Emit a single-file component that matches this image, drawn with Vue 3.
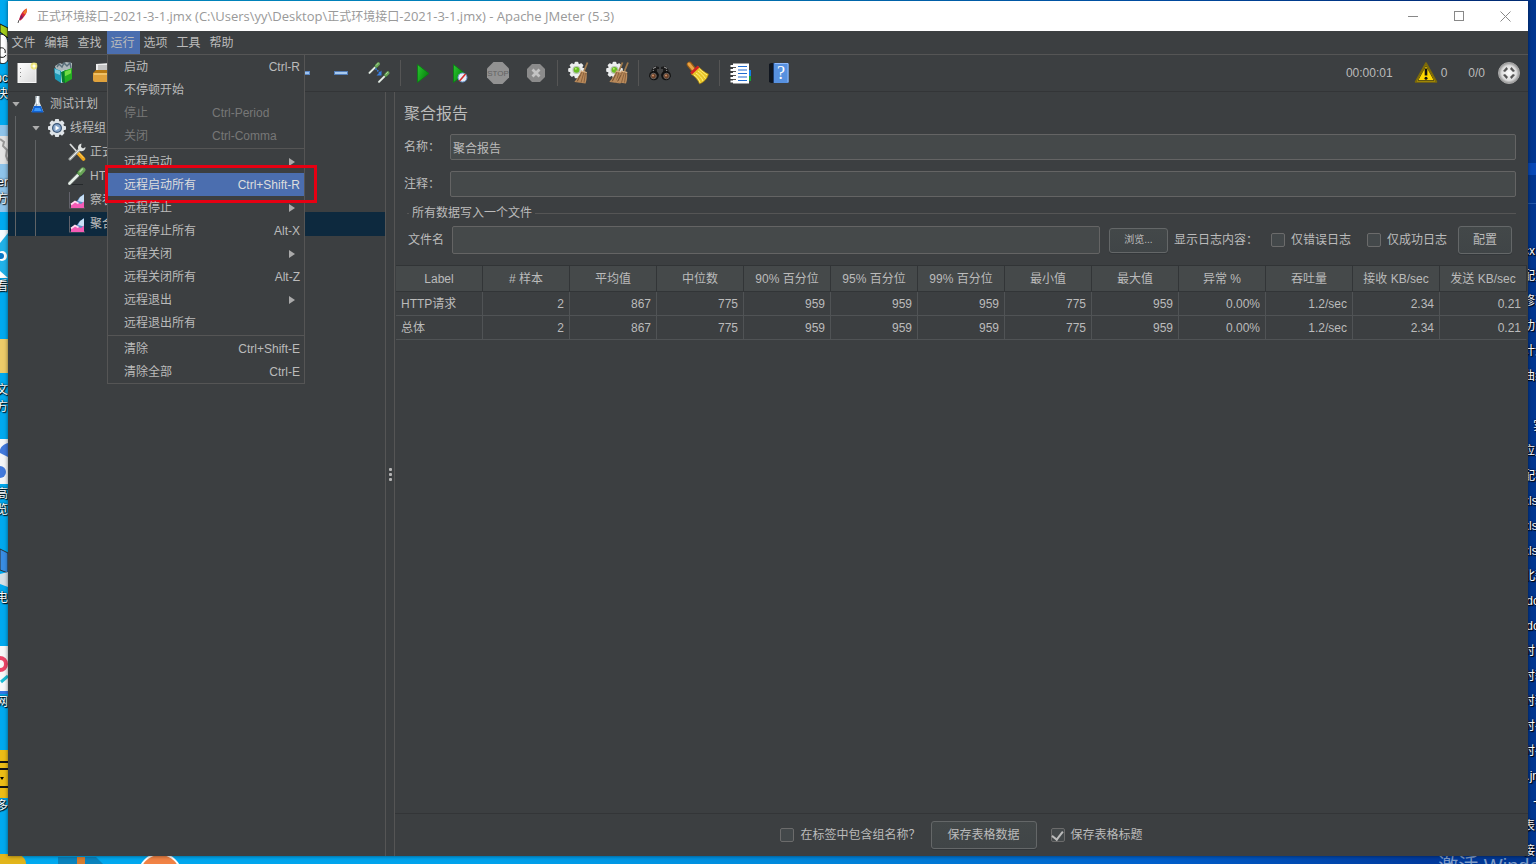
<script setup>
import { ref } from 'vue'

const menus = ['文件', '编辑', '查找', '运行', '选项', '工具', '帮助']
const openMenu = '运行'

const menuGroups = [
  [
    { label: '启动', key: 'Ctrl-R' },
    { label: '不停顿开始' },
    { label: '停止', key: 'Ctrl-Period', disabled: true },
    { label: '关闭', key: 'Ctrl-Comma', disabled: true }
  ],
  [
    { label: '远程启动', sub: true },
    { label: '远程启动所有', key: 'Ctrl+Shift-R', active: true },
    { label: '远程停止', sub: true },
    { label: '远程停止所有', key: 'Alt-X' },
    { label: '远程关闭', sub: true },
    { label: '远程关闭所有', key: 'Alt-Z' },
    { label: '远程退出', sub: true },
    { label: '远程退出所有' }
  ],
  [
    { label: '清除', key: 'Ctrl+Shift-E' },
    { label: '清除全部', key: 'Ctrl-E' }
  ]
]

const toolGroups = [
  ['new', 'templates', 'open'],
  ['expand', 'collapse', 'toggle'],
  ['start', 'startNoTimers', 'stop', 'shutdown'],
  ['clear', 'clearAll'],
  ['search', 'resetSearch'],
  ['functions', 'help']
]

const tree = [
  { label: '测试计划', icon: 'flask', level: 0, open: true },
  { label: '线程组', icon: 'gear', level: 1, open: true },
  { label: '正式环境', icon: 'tools', level: 2 },
  { label: 'HTTP请求', icon: 'pipette', level: 2 },
  { label: '察看结果树', icon: 'chart', level: 2 },
  { label: '聚合报告', icon: 'chart', level: 2, selected: true }
]

const columns = ['Label', '# 样本', '平均值', '中位数', '90% 百分位', '95% 百分位', '99% 百分位', '最小值', '最大值', '异常 %', '吞吐量', '接收 KB/sec', '发送 KB/sec']
const rows = [
  ['HTTP请求', '2', '867', '775', '959', '959', '959', '775', '959', '0.00%', '1.2/sec', '2.34', '0.21'],
  ['总体', '2', '867', '775', '959', '959', '959', '775', '959', '0.00%', '1.2/sec', '2.34', '0.21']
]

const name = ref('聚合报告')
const comment = ref('')
const fileName = ref('')
const onlyErrors = ref(false)
const onlySuccess = ref(false)
const includeGroup = ref(false)
const saveHeader = ref(true)

const leftLabels = [
  { t: 'doc', y: 70 }, { t: '快', y: 86 }, { t: 'ner', y: 174 }, { t: '方', y: 191 },
  { t: '看', y: 278 }, { t: '文', y: 382 }, { t: '方', y: 399 }, { t: '高', y: 486 },
  { t: '览', y: 502 }, { t: '电', y: 590 }, { t: '网', y: 694 }, { t: '多', y: 798 }
]
const rightNames = ['cx', '配置', '修改', '功能', '计划', '曲线', '', '   实', '应用', '配套', 'xls', 'xls', 'xls', '北新', ' doc', ' doc', '时', '时新', '时新', '时-', '时-', ' .jmx', '   -', '表', '接']
const rightLabels = rightNames.map((t, i) => ({ t, y: 243 + i * 25 }))

const gearTeeth = (cx, cy, r, w, fill) =>
  [0, 45, 90, 135].map(a => `<rect x="${cx - w / 2}" y="${cy - r}" width="${w}" height="${r * 2}" rx="1" fill="${fill}" transform="rotate(${a} ${cx} ${cy})"/>`).join('')

const broom = dx => `<g transform="translate(${dx} 0)"><path d="M20.500 1.500L17 10" stroke="#a07a4c" stroke-width="1.800"/><path d="M14 9.500l5.500 1.500c.5 4 .3 8-1 11.500l-11-1.500c-.2-1 5-5 6.500-11.500z" fill="#b98a5b"/><path d="M15 11l-5 9.500M17 11l-3 10.500M18.500 11.500l-1.500 10M13.500 14l-3 6" stroke="#795231" stroke-width=".7"/><path d="M13.800 10l6 1.500" stroke="#e0b98a"/></g>`
const clearGear = gearTeeth(9.5, 9, 8.3, 3.8, '#eceeee') + '<circle cx="9.500" cy="9" r="6.700" fill="#eceeee"/><circle cx="9.500" cy="9" r="4" fill="#b9c2b5"/><circle cx="9.500" cy="8.800" r="2.900" fill="#68bd22"/><circle cx="8.800" cy="7.800" r="1" fill="#b4ec68"/>'
const pip = (x, y, s) => `<g transform="translate(${x} ${y}) scale(${s})"><path d="M1.500 16.500L11 7" stroke="#59605d" stroke-width="4" stroke-linecap="round"/><path d="M1.500 16.500L11 7" stroke="#e7efe9" stroke-width="2.600" stroke-linecap="round"/><path d="M9 5l4 4" stroke="#24482a" stroke-width="2" stroke-linecap="round"/><path d="M12 6L15 2.800" stroke="#69a557" stroke-width="5" stroke-linecap="round"/><path d="M12 4.800L14.500 2" stroke="#b0d8a0" stroke-width="1.500" stroke-linecap="round"/></g>`

const icons = {
  new: '<rect x="3" y="2.500" width="18" height="19" fill="url(#paper)" stroke="#f7f7f7"/><path d="M5.500 7v1M5.500 11v1M5.500 15v1" stroke="#888"/><circle cx="19" cy="5" r="3.400" fill="#eadf63" opacity=".85"/><path d="M19 2v6M16 5h6" stroke="#fbf39a" stroke-width="1.200"/><circle cx="19" cy="5" r="1.500" fill="#fffff0"/>',
  templates: '<path d="M2 5l5-3 2 1 4-2 6 1v8l-8 5-7-2z" fill="#aeb8bb"/><path d="M4 6l2-3 3 3 2-4 3 3 3-3 1 5" fill="none" stroke="#596e7a" stroke-width="1.400"/><path d="M1 7l7 3v12l-6-4z" fill="#1d9bb8"/><path d="M2 8l5 2v4l-5-2z" fill="#78cbe0"/><path d="M8 10l3-1v12l-3 1z" fill="#bde7ef"/><path d="M8 11l5-2v13l-4-1z" fill="#087b33"/><path d="M11 10l8-3v11l-7 4z" fill="#24ae22"/><path d="M12 10.500l6-2.200v4l-6 3z" fill="#72dc45"/>',
  open: '<path d="M5 3l14-1v11H5z" fill="#eee"/><path d="M7 5h10M7 7h10M7 9h10" stroke="#999"/><path d="M2 12l3-3h17v4H2z" fill="#b87912"/><path d="M2 12h20l-1 9H4c-1 0-2-1-2-2z" fill="#e0a23c"/><path d="M3 13h18" stroke="#ffdf91"/>',
  expand: '<rect x="3.500" y="10.500" width="15" height="3" fill="#9fc3ed" stroke="#5a87c5"/><rect x="9.500" y="5" width="3" height="14" fill="#9fc3ed"/>',
  collapse: '<rect x="5.500" y="10.500" width="13" height="3" fill="#a8caef" stroke="#527db8"/>',
  toggle: pip(1.5, 1, 0.66) + pip(11, 10, 0.66) + '<path d="M8.500 7.500l5 5" stroke="#397fe0" stroke-width="1.600" stroke-dasharray="1.500 1"/><path d="M14.500 9.500v5h-5z" fill="#397fe0"/>',
  start: '<path d="M7.500 3.500v18L19 12.500z" fill="url(#play)" stroke="#087d12" stroke-width=".8"/>',
  startNoTimers: '<path d="M5.500 3.500v18L17 12.500z" fill="url(#play)" stroke="#087d12" stroke-width=".8"/><circle cx="14.500" cy="16.500" r="4.500" fill="#e8edf5" stroke="#6795cf"/><path d="M11.500 20l6-7" stroke="#d22b2b" stroke-width="1.600"/>',
  stop: '<path d="M7.500 1h9L23 7.500v9L16.500 23h-9L1 16.500v-9z" fill="#929292"/><text x="12" y="15" text-anchor="middle" font-family="Liberation Sans, sans-serif" font-size="8" fill="#636363">STOP</text>',
  shutdown: '<path d="M8 3h8l5 5v8l-5 5H8l-5-5V8z" fill="#8b8b8b"/><path d="M8.500 8.500l7 7M15.500 8.500l-7 7" stroke="#c4c4c4" stroke-width="2.800"/>',
  clear: clearGear + broom(0),
  clearAll: clearGear + broom(-3) + broom(2.5),
  search: '<path d="M4 8l3-3 4 1v5l-1 5H1z" fill="#1c1c1c"/><path d="M20 8l-3-3-4 1v5l1 5h9z" fill="#1c1c1c"/><path d="M5 7.500l3-1.500M16 6l3 1.500M2.500 12l3.500-3M18 9l3.500 3" stroke="#a0a0a0"/><rect x="9" y="8" width="6" height="5" fill="#444"/><circle cx="6" cy="14.500" r="4.800" fill="#111"/><circle cx="18" cy="14.500" r="4.800" fill="#111"/><circle cx="5.500" cy="15" r="2.800" fill="#6d4128" stroke="#777" stroke-width=".7"/><circle cx="18.500" cy="15" r="2.800" fill="#6d4128" stroke="#777" stroke-width=".7"/><circle cx="5" cy="14.500" r="1.100" fill="#c38d68"/><circle cx="18" cy="14.500" r="1.100" fill="#c38d68"/>',
  resetSearch: '<path d="M3.500 3.500l4 5" stroke="#9b5e15" stroke-width="5.500" stroke-linecap="round"/><path d="M3 3l4 5" stroke="#e9a345" stroke-width="3" stroke-linecap="round"/><path d="M5 13l7.500-7.500c3 3 6 6 10 7.500-1 5-5 8.500-9 10C12 19 9 15.500 5 13z" fill="#e8c527" stroke="#997412" stroke-width=".6"/><path d="M8 14c3 2 5 4 6 7.500M10 12c3 2 6 5 7 8M12 10c3 2 5 4 7.500 7.500M13.500 8c2 2 5 4 7.500 6" stroke="#fff080" stroke-width="1"/><path d="M5 12.500L12.500 5.500" stroke="#d12222" stroke-width="2.600"/>',
  functions: '<rect x="18" y="9" width="4" height="6" fill="#157ee4"/><rect x="18" y="15" width="4" height="5" fill="#16a332"/><rect x="4" y="2.500" width="16" height="20" fill="#fff"/><path d="M9 5.500h9M9 9h9M9 12.500h9M9 16h9M9 19.500h9" stroke="#216bd0" stroke-width="1.200"/><path d="M1.500 5h5M1.500 9h5M1.500 13h5M1.500 17h5M1.500 20.500h5" stroke="#fff" stroke-width="1.800"/><path d="M4 6.500h3M4 10.500h3M4 14.500h3M4 18.500h3" stroke="#555"/>',
  help: '<path d="M2 3l2-1h17v20H4l-2-1z" fill="#10161f"/><rect x="6" y="2" width="15.500" height="20" fill="#5791e0"/><path d="M6.500 2v20" stroke="#1f3e6f"/><path d="M8 2.500h13M21 3v18" stroke="#91bafb"/><text x="14" y="18" text-anchor="middle" font-family="Liberation Serif, serif" font-size="18" fill="#fff">?</text>',
  warning: '<path d="M12 2L1.500 21h21z" fill="#ffd800" stroke="#7d6a08" stroke-width="1.600" stroke-linejoin="round"/><path d="M12 4.500L3.800 19.500h16.400z" fill="none" stroke="#3e3610" stroke-width=".8"/><path d="M12 7.500v7" stroke="#111" stroke-width="2.600"/><circle cx="12" cy="17.200" r="1.500" fill="#111"/>',
  remote: '<circle cx="12" cy="12" r="10.500" fill="url(#ball)" stroke="#aaa"/><g fill="#555"><path d="M6 10L9.500 6l1.500 2-3 3z"/><path d="M18 10L14.500 6 13 8l3 3z"/><path d="M6 14l3.500 4 1.500-2-3-3z"/><path d="M18 14l-3.500 4-1.500-2 3-3z"/></g>',
  flask: '<path d="M7.500 1h4v6l4 10H3.500l4-10z" fill="#dce6ec"/><path d="M8 2h1.500v6l-4 8" fill="none" stroke="#7d8c97"/><path d="M6 11h7l2.500 6.500H3.500z" fill="#1264d5"/><path d="M7 13h5l1.500 3H6z" fill="#3b98fb"/><path d="M9.500 1v8" stroke="#fff"/>',
  gear: gearTeeth(9, 9, 9, 4.2, '#dfe4e8') + '<circle cx="9" cy="9" r="7.300" fill="#dfe4e8"/><circle cx="9" cy="9" r="5" fill="#3b5575"/><circle cx="9" cy="9" r="3.800" fill="#86a6cb"/><path d="M7.500 6.500v5l4-2.500z" fill="#fff"/>',
  tools: '<path d="M2 1l9 10" stroke="#d9dcdc" stroke-width="1.800"/><path d="M10 10l5.500 6" stroke="#eda51c" stroke-width="3.600" stroke-linecap="round"/><path d="M10.500 9.500l5 5.500" stroke="#ffd263"/><path d="M2 16L12 6" stroke="#a9afad" stroke-width="3" stroke-linecap="round"/><path d="M2 16L12 6" stroke="#eceeee"/><path d="M13.500.5a4 4 0 0 0-3 6l1.500 1.500a4 4 0 0 0 5.500-4L15 5.500 13 4z" fill="#dfe3e2"/>',
  pipette: '<path d="M2 17.500h13" stroke="#25292b"/>' + pip(0, 0, 1),
  chart: '<path d="M1.500 1v16M1 17h16" stroke="#62626b"/><path d="M3 15l6-5 2-3 5-4v13H3z" fill="#5b8fc8"/><path d="M10 10l2-4 4-2.500v8z" fill="#c9e0f6"/><path d="M3 13.500L7 10l3 2 3 1 3-2.500V17H3z" fill="#f45bb5"/><path d="M3 13.500l4-3 3.500 2" fill="none" stroke="#ffd9ef" stroke-width="1.800"/>'
}
</script>

<template>
  <div class="desktop">
    <svg class="defs" width="0" height="0" aria-hidden="true">
      <defs>
        <linearGradient id="paper" x1="0" y1="0" x2="1" y2="1"><stop offset="0" stop-color="#fff" /><stop offset="1" stop-color="#d9d9d9" /></linearGradient>
        <linearGradient id="play" x1="0" y1="0" x2="1" y2="0.600"><stop offset="0" stop-color="#2cc533" /><stop offset="0.500" stop-color="#17a51d" /><stop offset="1" stop-color="#0a7d10" /></linearGradient>
        <radialGradient id="ball"><stop offset="0" stop-color="#fff" /><stop offset="0.700" stop-color="#ddd" /><stop offset="1" stop-color="#8d8d8d" /></radialGradient>
      </defs>
    </svg>

    <svg class="strip" width="8" height="864" viewBox="0 0 8 864" aria-hidden="true">
      <path d="M0 24l8 4v10l-8-6z" fill="#a4cf1a" stroke="#111" />
      <path d="M0 34c6 0 8 5 8 10v16c-2 4-5 4-8 3z" fill="#fff" stroke="#111" />
      <path d="M0 48c4-1 6 2 5 5M0 57c3 1 5 0 6-2" fill="none" stroke="#111" />
      <rect y="125" width="8" height="87" fill="#8fc4ea" />
      <rect y="136" width="8" height="28" fill="#e4e4e4" />
      <path d="M0 139l4 3-1 4 4 4-1 6 2 5" fill="none" stroke="#999" stroke-width="2" />
      <path d="M0 230h8v8l-8 13z" fill="#f6fbff" /><path d="M0 243l8-10v45H0z" fill="#21b2e9" /><circle cx="2" cy="256" r="5" fill="#fff" /><circle cx="1" cy="256" r="3" fill="#0a79c8" /><path d="M0 271l8 7H0z" fill="#fff" />
      <rect y="339" width="8" height="34" fill="#edcb69" />
      <rect y="439" width="8" height="45" fill="#f5f6f8" /><path d="M8 443c-7 2-9 7-8 10l8 4z" fill="#4279dc" /><circle cx="0" cy="472" r="6" fill="#4279dc" />
      <path d="M0 549l8 4v20l-8-3z" fill="#398de3" stroke="#333" /><path d="M0 574l8-2v15l-8-3z" fill="#d8e1e6" />
      <rect y="646" width="8" height="45" fill="#f8f8f9" /><circle cx="0" cy="664" r="6" fill="none" stroke="#ed4568" stroke-width="4" /><path d="M1 682l7-6" stroke="#19bdd5" stroke-width="3" /><rect y="691" width="8" height="3" fill="#3478e4" />
      <rect y="750" width="8" height="48" fill="#edbd16" /><path d="M0 762h8M0 769h8M0 787h8" stroke="#151515" stroke-width="2" /><path d="M0 777h4l-2 3z" />
    </svg>
    <span v-for="l in leftLabels" :key="'l' + l.y" class="cap left" :style="{ top: l.y + 'px' }">{{ l.t }}</span>
    <span v-for="l in rightLabels" :key="'r' + l.y" class="cap right" :style="{ top: l.y + 'px' }">{{ l.t }}</span>
    <div class="rightglow"></div>
    <svg class="bottom" width="200" height="12" viewBox="0 0 200 12" aria-hidden="true">
      <path d="M0 2h18q8 3 8 10H0z" fill="#e2b51b" /><path d="M58 5h38l7 7H58z" fill="#0b83bd" /><rect x="77" y="5" width="8" height="7" fill="#d77c2e" />
      <circle cx="160" cy="23" r="21" fill="#f18345" stroke="#fff" stroke-width="2" />
    </svg>
    <span class="activate">激活 Windows</span>

    <main class="window">
      <header class="titlebar">
        <svg class="feather" width="12" height="16" viewBox="0 0 12 16"><path d="M1 15l1-3" stroke="#555" /><path d="M2 12C3 7 6 2 9.500.5c1.500 2-.5 7-6 12z" fill="#d3233b" /><path d="M6 5C7 3 8 1.500 9.500.5c1 1.500.2 3.500-1.300 6z" fill="#ef7b28" /><path d="M2.500 12c.5-2.500 1-4 2-5.500l1.500 3z" fill="#7b2168" /></svg>
        <h1><span>正式环境接口</span>-2021-3-1.jmx (C:\Users\yy\Desktop\<span>正式环境接口</span>-2021-3-1.jmx) - Apache JMeter (5.3)</h1>
        <button class="win" aria-label="最小化"><svg width="11" height="11"><path d="M0 5.500h10" stroke="#888" /></svg></button>
        <button class="win" aria-label="最大化"><svg width="11" height="11"><rect x=".5" y=".5" width="9" height="9" fill="none" stroke="#888" /></svg></button>
        <button class="win" aria-label="关闭窗口"><svg width="11" height="11"><path d="M.5.5l10 10M10.500.5l-10 10" stroke="#888" /></svg></button>
      </header>

      <nav class="menubar">
        <div v-for="m in menus" :key="m" class="menuslot">
          <button class="menubtn" :class="{ open: m === openMenu }">{{ m }}</button>
          <div v-if="m === openMenu" class="menu">
            <div v-for="(g, gi) in menuGroups" :key="gi" class="menugroup">
              <button v-for="it in g" :key="it.label" class="item" :class="{ active: it.active }" :disabled="it.disabled">
                <span>{{ it.label }}</span>
                <kbd v-if="it.key">{{ it.key }}</kbd>
                <i v-if="it.sub" class="sub"></i>
                <b v-if="it.active" class="mark"></b>
              </button>
            </div>
          </div>
        </div>
      </nav>

      <div class="toolbar">
        <div v-for="(g, gi) in toolGroups" :key="gi" class="tools">
          <button v-for="t in g" :key="t" class="tool" :aria-label="t"><svg width="24" height="24" viewBox="0 0 24 24" fill="none" v-html="icons[t]"></svg></button>
        </div>
        <div class="status">
          <span class="time">00:00:01</span>
          <svg width="24" height="24" viewBox="0 0 24 24" v-html="icons.warning"></svg>
          <span class="warn">0</span>
          <span class="threads">0/0</span>
          <svg width="24" height="24" viewBox="0 0 24 24" v-html="icons.remote"></svg>
        </div>
      </div>

      <div class="split">
        <aside class="tree">
          <div v-for="n in tree" :key="n.label" class="node" :class="['lv' + n.level, { selected: n.selected }]">
            <i class="twist" :class="{ shown: n.open }"></i>
            <svg width="18" height="18" viewBox="0 0 18 18" fill="none" v-html="icons[n.icon]"></svg>
            <span>{{ n.label }}</span>
          </div>
        </aside>
        <div class="divider"><i></i><i></i><i></i></div>
        <section class="panel">
          <h2>聚合报告</h2>
          <div class="field"><label for="name">名称：</label><input id="name" v-model="name" type="text" /></div>
          <div class="field second"><label for="comment">注释：</label><input id="comment" v-model="comment" type="text" /></div>
          <div class="legend"><span>所有数据写入一个文件</span></div>
          <div class="filerow">
            <label for="file">文件名</label>
            <input id="file" v-model="fileName" type="text" />
            <button class="btn browse">浏览...</button>
            <span class="show">显示日志内容：</span>
            <label class="check"><input v-model="onlyErrors" type="checkbox" />仅错误日志</label>
            <label class="check"><input v-model="onlySuccess" type="checkbox" />仅成功日志</label>
            <button class="btn config">配置</button>
          </div>
          <table>
            <thead><tr><th v-for="c in columns" :key="c">{{ c }}</th></tr></thead>
            <tbody><tr v-for="r in rows" :key="r[0]"><td v-for="(c, i) in r" :key="i">{{ c }}</td></tr></tbody>
          </table>
          <footer>
            <label class="check"><input v-model="includeGroup" type="checkbox" />在标签中包含组名称？</label>
            <button class="btn save">保存表格数据</button>
            <label class="check"><input v-model="saveHeader" type="checkbox" />保存表格标题</label>
          </footer>
        </section>
      </div>
    </main>
  </div>
</template>

<style>
body { margin: 0; }
</style>

<style scoped>
* { box-sizing: border-box; }
.desktop {
  position: relative;
  display: flex;
  height: 100vh;
  padding: 1px 8px 8px;
  overflow: hidden;
  background: linear-gradient(90deg, #00aaf0 0%, #00a2ec 32%, #008bdd 50%, #0060cc 75%, #003a9e 93%, #003690 100%);
  font: 12px/16px "Liberation Sans", "Noto Sans CJK SC", sans-serif;
  color: #bbb;
}
button, input { font: inherit; color: inherit; }
button { margin: 0; padding: 0; border: 0; background: none; }
.defs, .strip, .bottom, .cap, .activate, .rightglow { position: absolute; }
.strip { top: 0; left: 0; }
.bottom { bottom: 0; left: 0; }
.rightglow { top: 163px; right: 0; width: 8px; height: 41px; border-top: 12px solid #0749b8; border-bottom: 1px solid #2458a8; }
.cap { color: #fff; white-space: pre; line-height: 17px; text-shadow: 1px 1px 1px #000, 0 0 2px #000; }
.left { right: calc(100% - 8px); }
.right { left: calc(100% - 13px); }
.activate { top: calc(100% - 9px); right: -29px; font-size: 20px; line-height: 22px; color: #7f9cc6; }
.window {
  position: relative;
  z-index: 1;
  flex: 1;
  min-width: 0;
  display: flex;
  flex-direction: column;
  background: #3c3f41;
  box-shadow: 0 0 4px #0008;
}
.titlebar { display: flex; align-items: center; height: 30px; padding-left: 9px; background: #fff; }
h1 { flex: 1; margin: 0 0 0 8px; font: 13px/18px "Open Sans", "Noto Sans CJK SC", sans-serif; color: #999; white-space: nowrap; }
h1 span { font-size: 12px; }
.win { display: grid; place-items: center; width: 46px; height: 30px; }
.menubar { display: flex; height: 24px; border-bottom: 1px solid #555; }
.menuslot { position: relative; width: 33px; }
.menubtn { width: 33px; height: 23px; padding-right: 2px; text-align: center; }
.menubtn.open { background: #4b6eaf; }
.menu { position: absolute; z-index: 5; top: 23px; left: 0; width: 198px; border: 1px solid #555; background: #3c3f41; }
.menugroup + .menugroup { margin-top: 1px; padding-top: 1px; border-top: 1px solid #555; }
.item { position: relative; display: flex; align-items: center; justify-content: space-between; width: 100%; height: 23px; padding: 0 4px 0 16px; white-space: nowrap; }
.item.active { background: #4b6eaf; color: #ddd; }
.item:disabled { color: #777; }
.item:disabled kbd { width: 88px; text-align: left; }
kbd { font: inherit; }
.sub { width: 0; height: 0; margin-right: 5px; border-left: 6px solid #aaa; border-top: 4px solid transparent; border-bottom: 4px solid transparent; }
.mark { position: absolute; top: -8px; left: -3px; width: 212px; height: 38px; border: 3px solid #e60012; }
.toolbar { display: flex; align-items: center; height: 37px; border-bottom: 1px solid #333537; }
.tools { display: flex; align-items: center; height: 26px; }
.tools:nth-child(2) { margin-left: 162px; }
.tools:nth-child(n + 3)::before { content: ""; width: 5px; height: 26px; background: linear-gradient(#555, #555) 2px 0 / 1px 100% no-repeat; }
.tool { display: grid; place-items: center; width: 38px; height: 26px; }
.status { display: flex; align-items: center; margin-left: auto; padding-right: 7px; }
.time { margin-right: 21px; }
.warn { margin: 0 21px 0 3px; }
.threads { margin-right: 12px; }
.split { flex: 1; display: flex; min-height: 0; }
.tree { width: 378px; border-right: 1px solid #555; }
.node { display: flex; align-items: center; height: 24px; padding-left: 4px; white-space: nowrap; }
.node svg { margin: 0 4px 0 8px; }
.lv1 { padding-left: 24px; background: linear-gradient(#606365, #606365) 7px 0 / 1px 100% no-repeat; }
.lv2 { padding-left: 44px; background: linear-gradient(#606365, #606365) 7px 0 / 1px 100% no-repeat, linear-gradient(#606365, #606365) 27px 0 / 1px 100% no-repeat; }
.node.selected { background-color: #0d293e; }
.twist { width: 8px; height: 5px; }
.twist.shown { background: #adadad; clip-path: polygon(0 0, 100% 0, 50% 100%); }
.divider { display: flex; flex-direction: column; align-items: center; justify-content: center; gap: 2px; width: 8px; }
.divider i { width: 3px; height: 3px; border-radius: 1px; background: #b5b5b5; }
.panel { flex: 1; min-width: 0; display: flex; flex-direction: column; border-left: 1px solid #555; }
h2 { margin: 10px 0 0 9px; font-size: 16px; line-height: 24px; font-weight: 400; }
.field { display: flex; align-items: center; margin: 8px 12px 0 9px; }
.field label { width: 46px; }
.field.second { margin-top: 11px; }
input[type="text"] { flex: 1; min-width: 0; height: 26px; padding: 0 2px; border: 1px solid #646464; border-radius: 2px; background: #45494a; outline: 0; }
.legend { display: flex; align-items: center; gap: 3px; height: 16px; margin: 8px 12px 0 12px; }
.legend::before, .legend::after { content: ""; height: 1px; background: #555; }
.legend::before { width: 2px; }
.legend::after { flex: 1; }
.filerow { display: flex; align-items: center; margin: 5px 16px 11px 13px; white-space: nowrap; }
.filerow input[type="text"] { height: 28px; margin: 0 9px 0 8px; }
.btn { height: 28px; border: 1px solid #646768; border-radius: 3px; background: linear-gradient(#434849, #404547); box-shadow: 0 1px 0 #33373a; }
.browse { width: 59px; height: 25px; margin-right: 6px; font-size: 10px; }
.show { width: 97px; }
.config { width: 54px; }
.check { display: flex; align-items: center; gap: 6px; }
.filerow .check { margin-right: 11px; }
.filerow .check + .check { margin-left: 5px; }
input[type="checkbox"] { appearance: none; display: grid; justify-items: center; width: 14px; height: 14px; margin: 0; border: 1px solid #6b6b6b; border-radius: 2px; background: #43484a; }
input[type="checkbox"]:checked::before { content: ""; width: 5px; height: 9px; border: solid #bbb; border-width: 0 2px 2px 0; transform: rotate(38deg); }
table { width: calc(100% - 2px); margin-left: 1px; border-spacing: 0; table-layout: fixed; border-top: 1px solid #313436; }
th { height: 26px; padding: 0; border-right: 1px solid #323537; border-bottom: 1px solid #323537; background: #45494a; font-weight: 400; white-space: nowrap; }
td { height: 24px; padding: 0 5px; border-right: 1px solid #505355; border-bottom: 1px solid #505355; text-align: right; white-space: nowrap; }
td:first-child { text-align: left; }
td:last-child { border-right-color: transparent; }
footer { display: flex; align-items: center; justify-content: center; height: 43px; margin-top: auto; border-top: 1px solid #333537; }
.save { width: 106px; margin: 0 14px 0 10px; }
</style>
